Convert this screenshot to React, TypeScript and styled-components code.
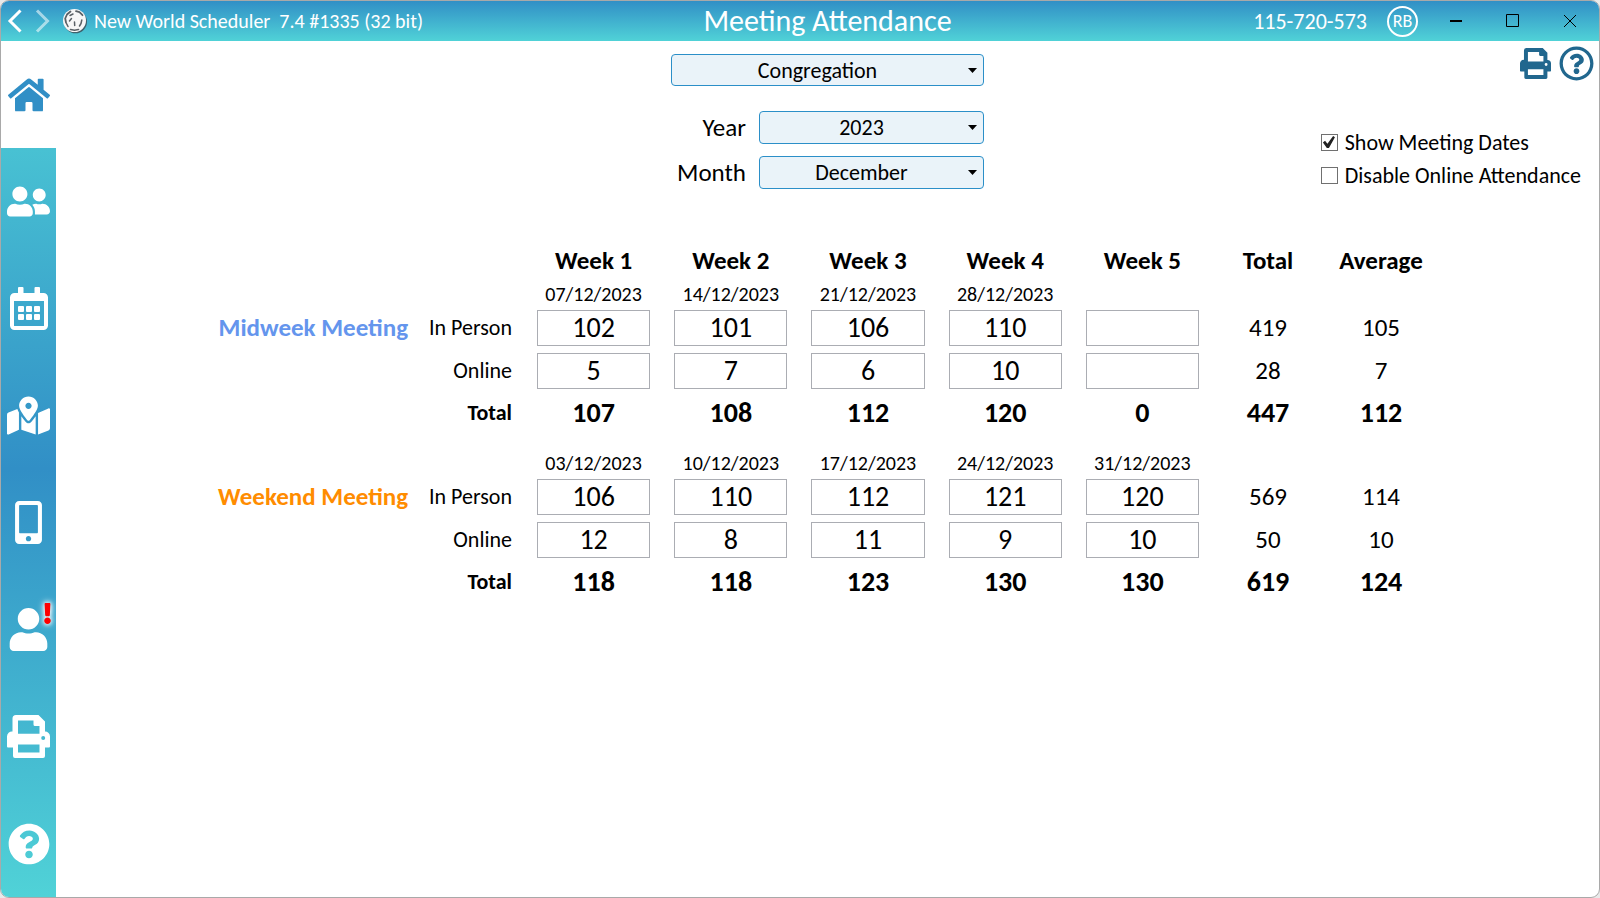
import React, { useState } from "react";
import styled, { createGlobalStyle } from "styled-components";
import {
  FaExclamation,
  FaHome,
  FaMapMarkedAlt,
  FaMobileAlt,
  FaQuestionCircle,
  FaRegQuestionCircle,
  FaUser,
  FaUserFriends,
} from "react-icons/fa";

const BLUE = "#318fc6";
const TEAL = "#50d2d7";

const GlobalStyle = createGlobalStyle`
  * { box-sizing: border-box; }
  html, body, #root { height: 100%; }
  body {
    margin: 0;
    background: #e9e9e9;
    color: #000;
    font-family: Calibri, Carlito, Lato, "Liberation Sans", sans-serif;
    font-size: 22px;
  }
  button, input, select { font: inherit; color: inherit; }
`;

const Window = styled.div`
  display: flex;
  flex-direction: column;
  min-height: 100%;
  border: 1px solid #a9a9a9;
  border-radius: 9px;
  overflow: hidden;
  background: #fff;
`;

const TitleBar = styled.header`
  display: flex;
  height: 40px;
  background: linear-gradient(${BLUE}, ${TEAL});
  color: #fff;
`;

const History = styled.nav`
  display: flex;
  align-items: center;
  justify-content: space-between;
  width: 55px;
  padding: 0 6px;
`;

const IconButton = styled.button<{ $faded?: boolean }>`
  display: flex;
  padding: 0;
  border: 0;
  background: none;
  color: inherit;
  opacity: ${(p) => (p.$faded ? 0.55 : 1)};
`;

const TitleGrid = styled.div`
  flex: 1;
  display: grid;
  grid-template-columns: 1fr auto 1fr;
  align-items: center;
`;

const AppName = styled.div`
  display: flex;
  align-items: center;
  gap: 6px;
  padding-left: 6px;
  font-size: 20px;
  white-space: pre;
`;

const PageTitle = styled.h1`
  margin: 0;
  font-size: 30px;
  font-weight: 400;
  line-height: 40px;
`;

const Account = styled.div`
  display: flex;
  align-items: center;
  justify-content: flex-end;
  padding-right: 22px;
`;

const Badge = styled.span`
  display: flex;
  align-items: center;
  justify-content: center;
  width: 31px;
  height: 31px;
  margin: 0 31px 0 20px;
  border: 2px solid #fff;
  border-radius: 50%;
  font-size: 18px;
`;

const WindowButtons = styled.div`
  display: flex;
  gap: 43px;
  color: #000;
`;

const Body = styled.div`
  flex: 1;
  display: flex;
`;

const Sidebar = styled.nav`
  display: flex;
  flex-direction: column;
  width: 55px;
  background: linear-gradient(${TEAL}, ${BLUE} 50%, ${TEAL});
`;

const SideLink = styled.a<{ $active?: boolean }>`
  flex: 1;
  display: flex;
  align-items: center;
  justify-content: center;
  background: ${(p) => (p.$active ? "#fff" : "none")};
  color: ${(p) => (p.$active ? BLUE : "#fff")};
`;

const Alerted = styled.span`
  position: relative;
  display: flex;
`;

const Alert = styled(FaExclamation)`
  position: absolute;
  top: -5px;
  right: -8px;
  color: #f00;
  filter: drop-shadow(0 0 2px #fff) drop-shadow(0 0 3px #fff);
`;

const Main = styled.main`
  flex: 1;
  min-width: 0;
`;

const Controls = styled.section`
  display: grid;
  grid-template-columns: 1fr 313px 1fr;
  height: 198px;
`;

const Filters = styled.div`
  grid-column: 2;
  display: grid;
  grid-template-columns: 1fr 225px;
  grid-template-rows: 45px 33px 33px;
  column-gap: 13px;
  row-gap: 12px;
  align-content: start;
  padding-top: 13px;
`;

const FilterLabel = styled.label`
  align-self: center;
  text-align: right;
  font-size: 25px;
`;

const SelectBox = styled.span<{ $wide?: boolean }>`
  display: flex;
  align-self: start;
  grid-column: ${(p) => (p.$wide ? "1 / -1" : "auto")};
  height: ${(p) => (p.$wide ? 32 : 33)}px;
`;

const Select = styled.select`
  width: 100%;
  padding: 0 21px 0 1px;
  border: 1px solid #2b8fc8;
  border-radius: 4px;
  appearance: none;
  background: #eaf3f9;
  text-align: center;
  text-align-last: center;
`;

const Arrow = styled.svg`
  align-self: center;
  flex: none;
  width: 9px;
  height: 5px;
  margin-left: -16px;
  margin-right: 7px;
  pointer-events: none;
`;

const Side = styled.div`
  grid-column: 3;
  display: flex;
  flex-direction: column;
  align-items: flex-end;
`;

const Tools = styled.div`
  display: flex;
  align-items: center;
  gap: 8px;
  padding: 5px 5px 0 0;
  color: #21678e;
`;

const Options = styled.div`
  display: flex;
  flex-direction: column;
  gap: 7px;
  padding: 48px 18px 0 0;
`;

const Option = styled.label`
  display: flex;
  align-items: center;
  gap: 7px;
  height: 26px;
  white-space: nowrap;
`;

const CheckBox = styled.input`
  appearance: none;
  display: grid;
  width: 17px;
  height: 17px;
  margin: 0;
  border: 1px solid #707070;
  background: #fff;
  &:checked::before {
    content: "";
    background: #212121;
    clip-path: polygon(8% 54%, 22% 42%, 38% 62%, 76% 10%, 88% 18%, 48% 90%, 34% 90%);
  }
`;

const Table = styled.table`
  width: 79%;
  min-width: 1080px;
  margin: 0 auto;
  border-collapse: collapse;
  table-layout: fixed;
  text-align: center;
  td, th { padding: 0; }
`;

const ColumnHead = styled.th`
  height: 43px;
  font-size: 25px;
`;

const DateRow = styled.tr<{ $spaced?: boolean }>`
  height: ${(p) => (p.$spaced ? 43 : 24)}px;
  vertical-align: bottom;
  font-size: 20px;
  line-height: 24px;
`;

const CountRow = styled.tr`
  height: 43px;
  font-size: 25px;
`;

const TotalRow = styled.tr`
  height: 40px;
  font-size: 28px;
  font-weight: 700;
`;

const MeetingName = styled.th<{ $color: string }>`
  text-align: right;
  font-size: 25px;
  white-space: nowrap;
  color: ${(p) => p.$color};
`;

const RowName = styled.th<{ $bold?: boolean }>`
  && { padding-right: 13px; }
  text-align: right;
  font-size: 22px;
  font-weight: ${(p) => (p.$bold ? 700 : 400)};
`;

const CountCell = styled.td`
  && { padding: 0 12px; }
`;

const Count = styled.input`
  display: block;
  width: 100%;
  height: 36px;
  padding: 0;
  border: 1px solid #abadb3;
  background: #fff;
  font-size: 28px;
  text-align: center;
`;

function PrinterIcon({ size }: { size: number }) {
  return (
    <svg width={size} height={size} viewBox="0 0 43 43" aria-hidden="true">
      <path
        fill="currentColor"
        fillRule="evenodd"
        d="M9 0h22.500l6.500 6.500V16.500a5 5 0 0 1 5 5v10a1 1 0 0 1-1 1h-4V41a2 2 0 0 1-2 2H8a2 2 0 0 1-2-2v-8.500H1a1 1 0 0 1-1-1v-10a5 5 0 0 1 5.500-5V3.500A3.500 3.500 0 0 1 9 0zM11 5.500v13.300h21.500V11H28a1.500 1.500 0 0 1-1.500-1.500v-4zM11 29.500V37.500h21.500v-8zM36.200 20.900a2 2 0 1 0 0 4 2 2 0 0 0 0-4z"
      />
    </svg>
  );
}

function CalendarIcon() {
  return (
    <svg width="38" height="43" viewBox="0 0 38 43" aria-hidden="true">
      <path
        fill="#fff"
        fillRule="evenodd"
        d="M9 0h3.500a1 1 0 0 1 1 1v5h11V1a1 1 0 0 1 1-1H29a1 1 0 0 1 1 1v5h3.500A4.500 4.500 0 0 1 38 10.500v28a4.500 4.500 0 0 1-4.500 4.500h-29A4.500 4.500 0 0 1 0 38.500v-28A4.500 4.500 0 0 1 4.500 6H8V1a1 1 0 0 1 1-1zM4 14v24.500a.5.5 0 0 0 .5.500h29a.5.5 0 0 0 .5-.500V14z"
      />
      {[8, 16, 24].map((x) =>
        [19, 27].map((y) => (
          <rect key={`${x}-${y}`} x={x} y={y} width="6" height="6" rx="1" fill="#fff" />
        )),
      )}
    </svg>
  );
}

function GlobeIcon() {
  return (
    <svg width="26" height="26" viewBox="0 0 26 26" aria-hidden="true">
      <circle cx="13.500" cy="13.800" r="11.500" fill="#3c4a52" opacity="0.800" />
      <circle cx="12.500" cy="12.500" r="11.500" fill="#f7f7f7" />
      <g fill="none" stroke="#5a6166" strokeLinecap="round" strokeLinejoin="round">
        <path strokeWidth="1.800" d="M8.500 3.500 5 6.500 3.200 10.500l.8 4M14 3.200l3.500 1 3 3" />
        <path strokeWidth="1.500" d="M8 7.500l3-1.500M9.500 10.500l-2 2.500M12.500 14l.2 3.500M19.800 12l-.8 3.500-1.500 2.500M4.500 15.500 6 18.500" />
        <path strokeWidth="1.600" d="M8.500 21.500l4 .7 4-.7" />
      </g>
    </svg>
  );
}

function Chevron({ forward }: { forward?: boolean }) {
  return (
    <svg width="15" height="24" viewBox="0 0 15 24" fill="none" stroke="currentColor" strokeWidth="3" aria-hidden="true">
      <path d={forward ? "M2 1.500 12.500 12 2 22.500" : "M13.500 1.500 3 12l10.500 10.500"} />
    </svg>
  );
}

function Picker({ id, label, value, options, wide }: { id: string; label?: string; value: string; options: string[]; wide?: boolean }) {
  return (
    <SelectBox $wide={wide}>
      <Select id={id} aria-label={label} defaultValue={value}>
        {options.map((o) => (
          <option key={o}>{o}</option>
        ))}
      </Select>
      <Arrow viewBox="0 0 9 5" aria-hidden="true">
        <path d="M0 0h9L4.500 5z" />
      </Arrow>
    </SelectBox>
  );
}

type Meeting = {
  name: string;
  color: string;
  dates: string[];
  inPerson: string[];
  online: string[];
};

const meetings: Meeting[] = [
  {
    name: "Midweek Meeting",
    color: "#6495ed",
    dates: ["07/12/2023", "14/12/2023", "21/12/2023", "28/12/2023", ""],
    inPerson: ["102", "101", "106", "110", ""],
    online: ["5", "7", "6", "10", ""],
  },
  {
    name: "Weekend Meeting",
    color: "#ff8c00",
    dates: ["03/12/2023", "10/12/2023", "17/12/2023", "24/12/2023", "31/12/2023"],
    inPerson: ["106", "110", "112", "121", "120"],
    online: ["12", "8", "11", "9", "10"],
  },
];

const weeks = [1, 2, 3, 4, 5];
const sum = (values: string[]) => values.reduce((total, v) => total + Number(v), 0);
const average = (values: string[]) => Math.round(sum(values) / (values.filter(Boolean).length || 1));

function MeetingRows({ meeting, showDates, spaced }: { meeting: Meeting; showDates: boolean; spaced: boolean }) {
  const [inPerson, setInPerson] = useState(meeting.inPerson);
  const [online, setOnline] = useState(meeting.online);
  const total = sum(inPerson) + sum(online);
  const held = inPerson.filter(Boolean).length || 1;

  const countCells = (kind: string, values: string[], update: (v: string[]) => void) =>
    values.map((value, i) => (
      <CountCell key={i}>
        <Count
          aria-label={`${meeting.name}, ${kind}, week ${i + 1}`}
          value={value}
          onChange={(e) => update(values.map((v, j) => (i === j ? e.target.value.replace(/\D/g, "") : v)))}
        />
      </CountCell>
    ));

  return (
    <tbody>
      <DateRow $spaced={spaced}>
        <td colSpan={2} />
        {meeting.dates.map((date, i) => (
          <td key={i}>{showDates ? date : ""}</td>
        ))}
        <td colSpan={2} />
      </DateRow>
      <CountRow>
        <MeetingName $color={meeting.color} scope="rowgroup">{meeting.name}</MeetingName>
        <RowName scope="row">In Person</RowName>
        {countCells("In Person", inPerson, setInPerson)}
        <td>{sum(inPerson)}</td>
        <td>{average(inPerson)}</td>
      </CountRow>
      <CountRow>
        <td />
        <RowName scope="row">Online</RowName>
        {countCells("Online", online, setOnline)}
        <td>{sum(online)}</td>
        <td>{average(online)}</td>
      </CountRow>
      <TotalRow>
        <td />
        <RowName $bold scope="row">Total</RowName>
        {weeks.map((w, i) => (
          <td key={w}>{Number(inPerson[i]) + Number(online[i])}</td>
        ))}
        <td>{total}</td>
        <td>{Math.round(total / held)}</td>
      </TotalRow>
    </tbody>
  );
}

export default function App() {
  const [showDates, setShowDates] = useState(true);

  return (
    <>
      <GlobalStyle />
      <Window>
        <TitleBar>
          <History aria-label="History">
            <IconButton aria-label="Back"><Chevron /></IconButton>
            <IconButton aria-label="Forward" $faded><Chevron forward /></IconButton>
          </History>
          <TitleGrid>
            <AppName>
              <GlobeIcon />
              <span>New World Scheduler  7.4 #1335 (32 bit)</span>
            </AppName>
            <PageTitle>Meeting Attendance</PageTitle>
            <Account>
              <span>115-720-573</span>
              <Badge>RB</Badge>
              <WindowButtons>
                <IconButton aria-label="Minimize">
                  <svg width="14" height="14" viewBox="0 0 14 14"><path d="M1 6h12v2H1z" /></svg>
                </IconButton>
                <IconButton aria-label="Maximize">
                  <svg width="14" height="14" viewBox="0 0 14 14" fill="none" stroke="#000"><path d="M.5.5h12v12H.5z" /></svg>
                </IconButton>
                <IconButton aria-label="Close">
                  <svg width="14" height="14" viewBox="0 0 14 14" stroke="#000"><path d="M1 1l12 12M13 1 1 13" /></svg>
                </IconButton>
              </WindowButtons>
            </Account>
          </TitleGrid>
        </TitleBar>
        <Body>
          <Sidebar aria-label="Sections">
            <SideLink href="#home" aria-label="Home" $active><FaHome size={42} /></SideLink>
            <SideLink href="#persons" aria-label="Persons"><FaUserFriends size={43} /></SideLink>
            <SideLink href="#calendar" aria-label="Calendar"><CalendarIcon /></SideLink>
            <SideLink href="#territories" aria-label="Territories"><FaMapMarkedAlt size={43} /></SideLink>
            <SideLink href="#mobile" aria-label="Mobile"><FaMobileAlt size={43} /></SideLink>
            <SideLink href="#profile" aria-label="Profile">
              <Alerted>
                <FaUser size={43} />
                <Alert size={21} />
              </Alerted>
            </SideLink>
            <SideLink href="#print" aria-label="Print"><PrinterIcon size={43} /></SideLink>
            <SideLink href="#help" aria-label="Help"><FaQuestionCircle size={42} /></SideLink>
          </Sidebar>
          <Main>
            <Controls>
              <Filters>
                <Picker wide id="group" label="Group" value="Congregation" options={["Congregation"]} />
                <FilterLabel htmlFor="year">Year</FilterLabel>
                <Picker id="year" value="2023" options={["2022", "2023", "2024"]} />
                <FilterLabel htmlFor="month">Month</FilterLabel>
                <Picker id="month" value="December" options={["October", "November", "December"]} />
              </Filters>
              <Side>
                <Tools>
                  <IconButton aria-label="Print page"><PrinterIcon size={31} /></IconButton>
                  <IconButton aria-label="Page help"><FaRegQuestionCircle size={35} /></IconButton>
                </Tools>
                <Options>
                  <Option>
                    <CheckBox type="checkbox" checked={showDates} onChange={(e) => setShowDates(e.target.checked)} />
                    Show Meeting Dates
                  </Option>
                  <Option>
                    <CheckBox type="checkbox" />
                    Disable Online Attendance
                  </Option>
                </Options>
              </Side>
            </Controls>
            <Table>
              <colgroup>
                <col width="190" />
                <col width="117" />
                {weeks.map((w) => <col key={w} />)}
                <col width="114" />
                <col width="112" />
              </colgroup>
              <thead>
                <tr>
                  <td colSpan={2} />
                  {weeks.map((w) => <ColumnHead key={w} scope="col">Week {w}</ColumnHead>)}
                  <ColumnHead scope="col">Total</ColumnHead>
                  <ColumnHead scope="col">Average</ColumnHead>
                </tr>
              </thead>
              {meetings.map((m, i) => (
                <MeetingRows key={m.name} meeting={m} showDates={showDates} spaced={i > 0} />
              ))}
            </Table>
          </Main>
        </Body>
      </Window>
    </>
  );
}
